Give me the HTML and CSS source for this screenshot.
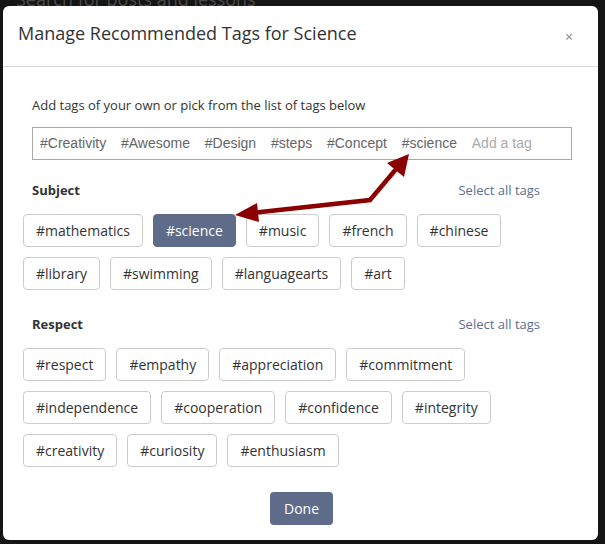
FILE: index.html
```html
<!DOCTYPE html>
<html>
<head>
<meta charset="utf-8">
<link rel="stylesheet" href="styles.css">
</head>
<body>
<div class="backdrop">
  <div class="search-text">Search for posts and lessons</div>
</div>
<div class="modal">
  <div class="modal-header">
    <h4 class="modal-title">Manage Recommended Tags for Science</h4>
    <span class="close">×</span>
  </div>
  <div class="modal-body">
    <p class="intro">Add tags of your own or pick from the list of tags below</p>
    <div class="tag-input">
      <span class="itag">#Creativity</span>
      <span class="itag">#Awesome</span>
      <span class="itag">#Design</span>
      <span class="itag">#steps</span>
      <span class="itag">#Concept</span>
      <span class="itag">#science</span>
      <span class="placeholder">Add a tag</span>
    </div>

    <div class="section-head">
      <span class="section-title">Subject</span>
      <a class="select-all">Select all tags</a>
    </div>
    <div class="tags">
      <span class="tag">#mathematics</span>
      <span class="tag active">#science</span>
      <span class="tag">#music</span>
      <span class="tag">#french</span>
      <span class="tag">#chinese</span>
      <span class="tag">#library</span>
      <span class="tag">#swimming</span>
      <span class="tag">#languagearts</span>
      <span class="tag">#art</span>
    </div>

    <div class="section-head second">
      <span class="section-title">Respect</span>
      <a class="select-all">Select all tags</a>
    </div>
    <div class="tags">
      <span class="tag">#respect</span>
      <span class="tag">#empathy</span>
      <span class="tag">#appreciation</span>
      <span class="tag">#commitment</span>
      <span class="tag">#independence</span>
      <span class="tag">#cooperation</span>
      <span class="tag">#confidence</span>
      <span class="tag">#integrity</span>
      <span class="tag">#creativity</span>
      <span class="tag">#curiosity</span>
      <span class="tag">#enthusiasm</span>
    </div>

    <div class="footer">
      <button class="done">Done</button>
    </div>
  </div>
</div>
<svg class="arrow" width="605" height="544" viewBox="0 0 605 544">
  <polyline points="256,212.5 370,200 397,168" fill="none" stroke="#8b0000" stroke-width="4.5" stroke-linejoin="miter"/>
  <polygon points="235,215 257,203 259,222" fill="#8b0000"/>
  <polygon points="409,154 387,163 404,177" fill="#8b0000"/>
</svg>
</body>
</html>
```
FILE: styles.css
```css
html, body {
  margin: 0;
  padding: 0;
}
body {
  width: 605px;
  height: 544px;
  background: #151515;
  font-family: "Open Sans", "Liberation Sans", sans-serif;
  color: #333;
  overflow: hidden;
  position: relative;
}
.backdrop {
  height: 544px;
}
.search-text {
  margin-top: -13px;
  padding-left: 16px;
  font-size: 18px;
  line-height: 24px;
  color: #4a4a4a;
}
.modal {
  position: absolute;
  left: 3px;
  top: 6px;
  width: 595px;
  height: 534px;
  background: #fff;
  border-radius: 6px;
  box-sizing: border-box;
}
.modal-header {
  display: flex;
  align-items: center;
  justify-content: space-between;
  padding: 15px 25px 20px 15px;
  border-bottom: 1px solid #d9d9d9;
}
.modal-title {
  margin: 0;
  font-size: 18px;
  font-weight: 400;
  line-height: 25px;
  color: #333;
}
.close {
  font-size: 14px;
  line-height: 14px;
  color: #7d8aa3;
  margin-top: 6px;
}
.modal-body {
  padding: 29px 20px 0 20px;
}
.intro {
  margin: 0 0 0 9px;
  font-size: 13px;
  line-height: 18px;
  color: #333;
}
.tag-input {
  margin: 13px 6px 0 9px;
  height: 33px;
  box-sizing: border-box;
  border: 1px solid #a9a9a9;
  display: flex;
  align-items: center;
  gap: 14.8px;
  padding: 0 0 2px 7px;
  font-family: "Liberation Sans", Arial, sans-serif;
  font-size: 14px;
  color: #666;
}
.placeholder {
  color: #aaa;
}
.section-head {
  display: flex;
  justify-content: space-between;
  align-items: center;
  margin: 21px 38px 0 9px;
  height: 18px;
}
.section-head.second {
  margin-top: 25px;
}
.section-title {
  font-size: 13px;
  font-weight: 700;
  color: #333;
}
.select-all {
  font-size: 13px;
  color: #5b6e93;
}
.tags {
  display: flex;
  flex-wrap: wrap;
  row-gap: 10px;
  column-gap: 10px;
  margin-top: 15px;
  padding-right: 60px;
}
.tag {
  display: inline-block;
  box-sizing: border-box;
  height: 33px;
  line-height: 31px;
  padding: 0 12px;
  border: 1px solid #ccc;
  border-radius: 4px;
  font-size: 14px;
  color: #333;
  background: #fff;
}
.tag.active {
  background: #5e6c8a;
  border-color: #5e6c8a;
  color: #fff;
}
.footer {
  display: flex;
  justify-content: center;
  margin-top: 25px;
  padding-left: 2px;
}
.done {
  height: 33px;
  padding: 0 14px;
  border: none;
  border-radius: 4px;
  background: #5e6c8a;
  color: #fff;
  font-family: "Open Sans", "Liberation Sans", sans-serif;
  font-size: 14px;
}
.arrow {
  position: absolute;
  left: 0;
  top: 0;
  pointer-events: none;
}
```
